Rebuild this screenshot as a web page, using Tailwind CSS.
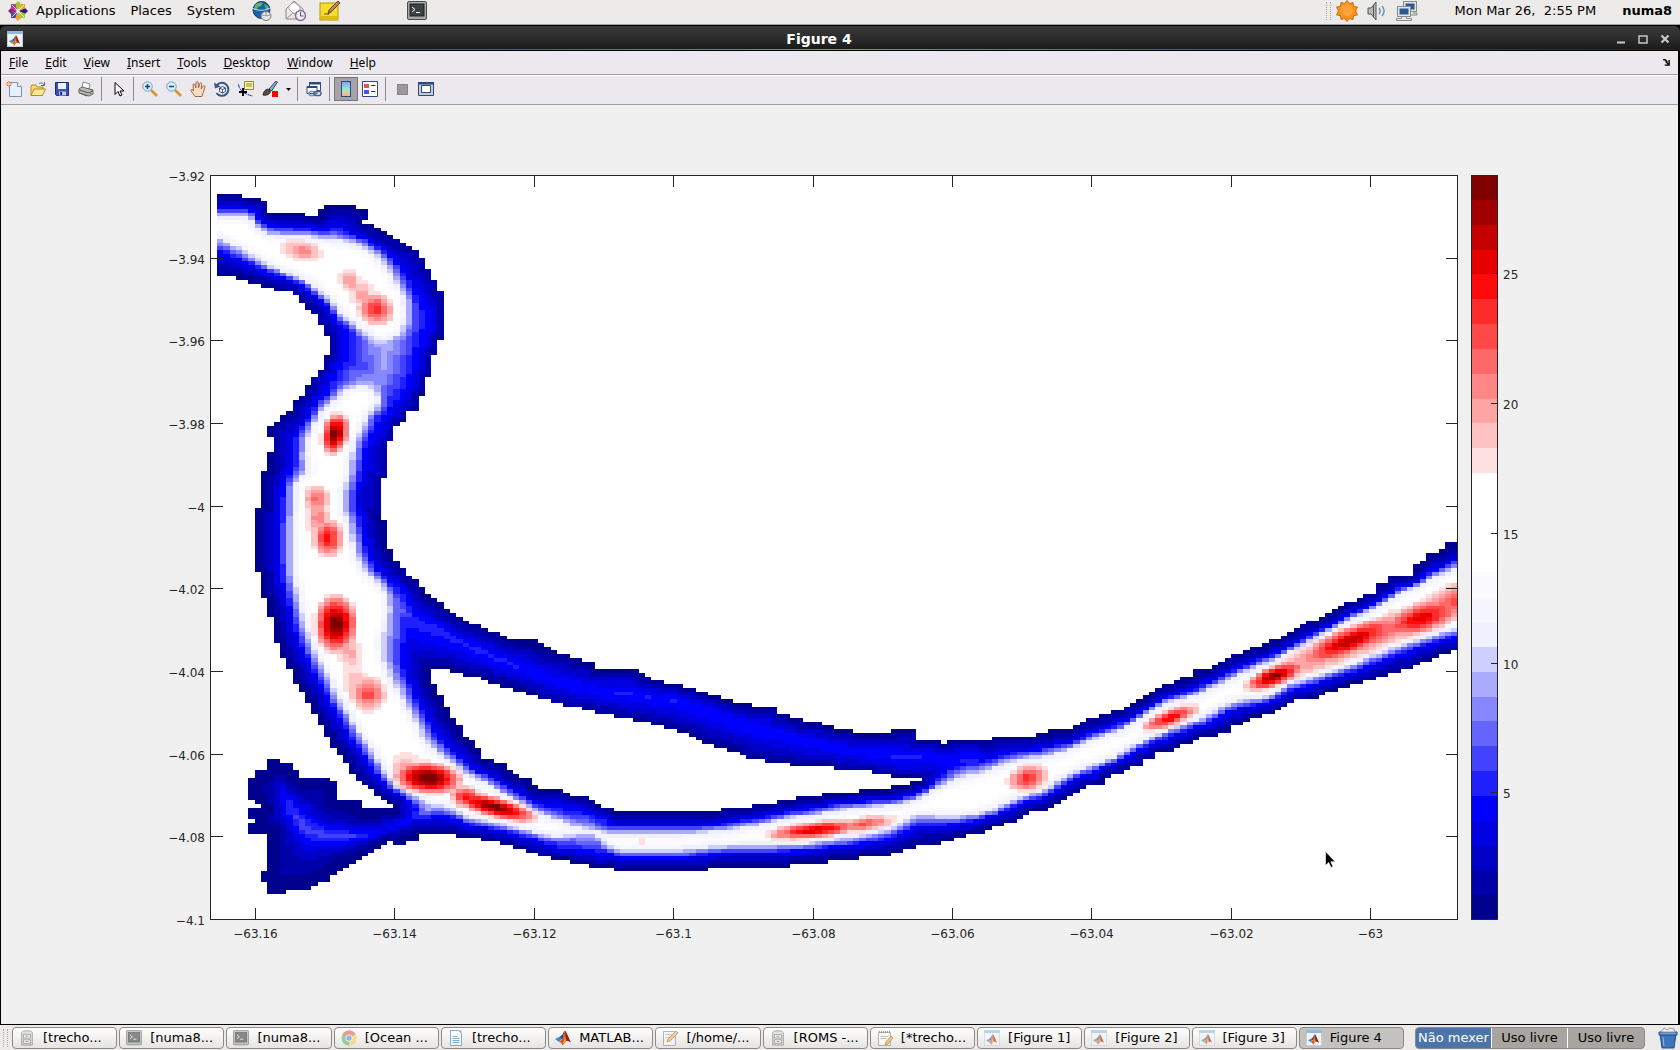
<!DOCTYPE html>
<html lang="en">
<head>
    <meta charset="UTF-8">
    <meta name="viewport" content="width=device-width, initial-scale=1.0">
    <title>Figure 4</title>
    <script src="https://cdn.jsdelivr.net/npm/@tailwindcss/browser@4"></script>
</head>
<body class="min-h-screen flex flex-col bg-[#edebe9] text-black text-[13px] leading-4 font-['DejaVu_Sans',sans-serif]">

    <!-- Shared icons -->
    <svg class="hidden">
        <symbol id="i-matlab" viewBox="0 0 16 16">
            <path d="M0 9l5-2.500 2.500 2-3.500 3.500z" fill="#3a8ec8"/>
            <path d="M5 6.500l2-1.500c1-1 1.600-3.500 2.600-4.500l-1.600 8-1.500.500z" fill="#1c4f8c"/>
            <path d="M4 12c1.500-1 3-2 4-4.500 .500-3 1-6 2-7 1.500 1 3.500 8 6 12-2-1-3-2-4.500-1.500S9 14 7.500 15.500C7 13.500 5.500 12 4 12z" fill="#d9541e"/>
            <path d="M10 .500c1.500 1 3.500 8 6 12-2-1-3-2-4.500-1.500z" fill="#8c1d12"/>
            <path d="M9 4c.800 2 .600 6-1.500 10 1.500-1 2.500-2.500 3.500-3z" fill="#f8a030"/>
        </symbol>
        <symbol id="i-figure" viewBox="0 0 16 16">
            <rect x=".5" y=".5" width="15" height="15" fill="#f2f3f5" stroke="#c9cdd2"/>
            <path d="M0 0h16v3H0z" fill="#8bbbe0"/>
            <svg x="2" y="4" width="11" height="11"><use href="#i-matlab"/></svg>
        </symbol>
        <symbol id="i-term" viewBox="0 0 20 20">
            <rect x=".5" y=".5" width="19" height="18" rx="1.500" fill="#a9aba6" stroke="#4a4c49"/>
            <rect x="3" y="3" width="14" height="12" fill="#3b4144" stroke="#222"/>
            <path d="M5 6l3 2.500-3 2.500M9 11.500h4" fill="none" stroke="#fff"/>
        </symbol>
        <symbol id="i-cabinet" viewBox="0 0 16 18">
            <path d="M2 3l2-2h8l2 2v14H2z" fill="#cfcfcc" stroke="#6b6b68"/>
            <rect x="4" y="5" width="8" height="4" fill="#eee" stroke="#777"/>
            <rect x="4" y="11" width="8" height="4" fill="#eee" stroke="#777"/>
            <path d="M6.500 7h3M6.500 13h3" stroke="#555"/>
        </symbol>
    </svg>

    <!-- Desktop panel -->
    <header class="h-[25px] shrink-0 flex items-center pl-2 pr-2 pb-[2px] border-b border-[#a5a39e] whitespace-nowrap">
        <svg class="w-5 h-5 mr-2" viewBox="0 0 20 20">
            <path d="M10 0l3 3-3 6-3-6z" fill="#9ccd2a"/><path d="M10 20l3-3-3-6-3 6z" fill="#efa724"/>
            <path d="M0 10l3-3 6 3-6 3z" fill="#932279"/><path d="M20 10l-3-3-6 3 6 3z" fill="#262577"/>
            <path d="M3 3h4.500l1.500 5-1 1-5-1.500z" fill="#b23a92"/><path d="M17 3v4.500l-5 1.500-1-1 1.500-5z" fill="#efa724"/>
            <path d="M3 17v-4.500l5-1.500 1 1-1.500 5z" fill="#4a49a8"/><path d="M17 17h-4.500l-1.500-5 1-1 5 1.500z" fill="#9ccd2a"/>
            <path d="M4 4l12 12M16 4L4 16" stroke="#fff" stroke-width=".8"/>
        </svg>
        <nav class="flex gap-[15px]">
            <a href="#">Applications</a>
            <a href="#">Places</a>
            <a href="#">System</a>
        </nav>
        <div class="flex items-center gap-3 ml-4">
            <button aria-label="Web browser">
                <svg class="w-[22px] h-[22px] block" viewBox="0 0 22 22">
                    <circle cx="10.500" cy="10" r="8.500" fill="#1c5fa8" stroke="#123c70"/>
                    <path d="M4 5c3-3 6-3 8-2l-2 3-3 1-1 3-3-1zM13 4l4 2 1 4-3-1z" fill="#62b36a"/>
                    <path d="M1 8c5 3 13 3 18 0" fill="none" stroke="#c6ddf3"/>
                    <ellipse cx="15" cy="16" rx="5" ry="4.500" fill="#e5e5e5" stroke="#777"/>
                    <path d="M15 12v4M11 15c3 1 5 1 8 0" fill="none" stroke="#999"/>
                </svg>
            </button>
            <button aria-label="Mail">
                <svg class="w-[22px] h-[22px] block" viewBox="0 0 22 22">
                    <path d="M1 9l8-8 9 8v10H1z" fill="#e8e8e6" stroke="#8a8a86"/>
                    <path d="M4 9V6l5-4 6 5v3l-6 4z" fill="#fff" stroke="#aaa"/>
                    <path d="M1 19l7-6 2 1" fill="none" stroke="#999"/>
                    <circle cx="15.500" cy="15.500" r="5" fill="#f2eef5" stroke="#8b6a9b" stroke-width="1.500"/>
                    <path d="M15.500 12v4h3" fill="none" stroke="#555"/>
                </svg>
            </button>
            <button aria-label="Notes">
                <svg class="w-[22px] h-[22px] block" viewBox="0 0 22 22">
                    <rect x="1" y="3" width="18" height="17" fill="#f7dc2c" stroke="#b89608"/>
                    <path d="M2 16h16v3H2z" fill="#e0bb14"/>
                    <path d="M9 14l1-4 9-9 2 2-9 9z" fill="#c58b35" stroke="#5c3d12"/>
                    <path d="M5 14h5" stroke="#555"/>
                </svg>
            </button>
        </div>
        <button class="ml-[66px]" aria-label="Terminal"><svg class="w-5 h-5 block"><use href="#i-term"/></svg></button>
        <div class="ml-auto flex items-center">
            <div class="w-[5px] h-[18px] mr-1 border-x border-dotted border-[#aaa]"></div>
            <svg class="w-6 h-[22px] mr-[6px]" viewBox="0 0 24 22">
                <path d="M12 .500l2.500 3L18 2.500l.500 4 4 .500-2 4 2 4-4 .500-.500 4-3.500-1L12 21.500l-2.500-3-3.500 1-.500-4-4-.500 2-4-2-4 4-.500.500-4 3.500 1z" fill="#f8921e" stroke="#d26a08"/>
                <circle cx="12" cy="10" r="6" fill="#ffae4a" opacity=".6"/>
            </svg>
            <svg class="w-6 h-5 mr-[6px]" viewBox="0 0 24 20">
                <path d="M3 7h3l5-6v18l-5-6H3z" fill="#b9bbb8" stroke="#555753"/>
                <path d="M8.500 4v12" stroke="#555753"/>
                <path d="M14 7c1.500 2 1.500 4 0 6M17 5c2.500 3 2.500 7 0 10" fill="none" stroke="#6f93c4" stroke-width="1.500"/>
            </svg>
            <svg class="w-6 h-[22px]" viewBox="0 0 24 22">
                <rect x="8.500" y="1.500" width="13" height="10" fill="#e3e5e2" stroke="#888a85"/><rect x="10.500" y="3.500" width="9" height="6" fill="#2b5797"/>
                <path d="M14 15h8v-2h-4" fill="#ddd" stroke="#888a85"/>
                <rect x="2.500" y="6.500" width="13" height="10" fill="#e3e5e2" stroke="#888a85"/><rect x="4.500" y="8.500" width="9" height="6" fill="#2b5797"/>
                <path d="M1.500 20.500h15v-2h-5v-2h-5v2h-5z" fill="#e8e8e6" stroke="#888a85"/>
            </svg>
            <span class="ml-[36px] whitespace-pre">Mon Mar 26,  2:55 PM</span>
            <span class="ml-[26px] font-bold">numa8</span>
        </div>
    </header>

    <!-- Window -->
    <main class="flex-1 flex flex-col bg-black">
        <div class="h-[26px] shrink-0 flex items-center pt-px px-[9px] rounded-t-md border-y border-black bg-linear-to-b from-[#3a3a3a] via-[#2c2c2c] to-[#191919] relative">
            <svg class="w-4 h-4 -ml-[2px]"><use href="#i-figure"/></svg>
            <h1 class="flex-1 text-center text-white text-sm leading-4 font-bold">Figure 4</h1>
            <div class="flex gap-[10px] text-[#c8c8c8]">
                <button aria-label="Minimize"><svg class="w-3 h-3 block" viewBox="0 0 12 12"><path d="M2 8.500h8v2H2z" fill="currentColor"/></svg></button>
                <button aria-label="Maximize"><svg class="w-3 h-3 block" viewBox="0 0 12 12"><path d="M2 3h8v7H2z" fill="none" stroke="currentColor" stroke-width="1.500"/></svg></button>
                <button aria-label="Close"><svg class="w-3 h-3 block" viewBox="0 0 12 12"><path d="M2.500 2.500l7 7M9.500 2.500l-7 7" stroke="currentColor" stroke-width="2.200"/></svg></button>
            </div>
            <div class="absolute inset-x-0 bottom-0 h-px bg-linear-to-r from-[#222] via-[#6d8fc0] to-[#222]"></div>
        </div>

        <div class="flex-1 flex flex-col ml-px mr-[2px] bg-[#f0f0f0]">
            <nav class="h-6 shrink-0 flex items-center gap-[17px] pl-2 pr-2 bg-[#ebe9ed] border-b border-[#9f9da1] text-xs font-['Noto_Sans',sans-serif]">
                <a href="#"><u>F</u>ile</a>
                <a href="#"><u>E</u>dit</a>
                <a href="#"><u>V</u>iew</a>
                <a href="#"><u>I</u>nsert</a>
                <a href="#"><u>T</u>ools</a>
                <a href="#"><u>D</u>esktop</a>
                <a href="#"><u>W</u>indow</a>
                <a href="#"><u>H</u>elp</a>
                <button class="ml-auto" aria-label="Dock figure">
                    <svg class="w-[7px] h-[7px] block" viewBox="0 0 8 8"><path d="M0 1c2-1 4 1 5 3M7 1v6H2M7 7L3 3" fill="none" stroke="#000" stroke-width="1.600"/></svg>
                </button>
            </nav>

            <div class="h-[30px] shrink-0 flex items-center pl-px pb-[2px] bg-[#ebe9ed] border-t border-white border-b border-b-[#9f9da1] [&>button]:flex [&>button]:items-center [&>button]:justify-center">
                <button class="w-6 h-6" aria-label="New figure"><svg class="w-4 h-4" viewBox="0 0 16 16"><path d="M3.500 1.500h8l4 4v10h-12z" fill="#e6f1fb" stroke="#7093b8"/><path d="M11.500 1.500v4h4" fill="#fff" stroke="#7093b8"/><path d="M3 0v6M0 3h6M1 1l4 4M5 1L1 5" stroke="#e8742a"/><circle cx="3" cy="3" r="1" fill="#fff3a0"/></svg></button>
                <button class="w-6 h-6" aria-label="Open"><svg class="w-4 h-4" viewBox="0 0 16 16"><path d="M1 14V5l1-1h4l1 2h6v3" fill="#f6dc7e" stroke="#b38b1d"/><path d="M1 14.500l3-6.500h11.500l-3 6.500z" fill="#fcea98" stroke="#b38b1d"/><path d="M9 3c2-2 4-1 5 1M14.500 1v3.500H11" fill="none" stroke="#4a6a94"/></svg></button>
                <button class="w-6 h-6" aria-label="Save"><svg class="w-4 h-4" viewBox="0 0 16 16"><path d="M1.500 1.500h13v13h-12l-1-1z" fill="#3c50b8" stroke="#202a78"/><path d="M4 2h8v6H4z" fill="#eef2fb"/><path d="M5 10.500h7v4H5z" fill="#c7cbd8"/><path d="M6 11h2v3H6z" fill="#202a78"/></svg></button>
                <button class="w-6 h-6" aria-label="Print"><svg class="w-4 h-4" viewBox="0 0 16 16"><path d="M4 7l1-6 7 2-1 5z" fill="#fff" stroke="#888"/><path d="M1 8l3-2 11 3v4l-4 2L1 12z" fill="#b9bab6" stroke="#666"/><path d="M1.500 9l9.500 3 4-2.500M3 12.500l6 2.500" fill="none" stroke="#555"/><path d="M12 12.500h1.500" stroke="#3a3"/></svg></button>
                <span class="w-2 h-6 border-l border-[#8b898d] translate-x-[3px]"></span>
                <button class="w-6 h-6" aria-label="Edit plot"><svg class="w-4 h-4" viewBox="0 0 16 16"><path d="M5 1.500v12l3-3 2 4.500 2-1-2-4h4z" fill="#fff" stroke="#000"/></svg></button>
                <span class="w-2 h-6 border-l border-[#8b898d] translate-x-[3px]"></span>
                <button class="w-6 h-6" aria-label="Zoom in"><svg class="w-4 h-4" viewBox="0 0 16 16"><path d="M9 9l6 6" stroke="#d8912c" stroke-width="2.500"/><circle cx="5.500" cy="5.500" r="4.700" fill="#d4f0fb" stroke="#6f9fc4"/><path d="M3 5.500h5M5.500 3v5" stroke="#1a3f80" stroke-width="1.500"/></svg></button>
                <button class="w-6 h-6" aria-label="Zoom out"><svg class="w-4 h-4" viewBox="0 0 16 16"><path d="M9 9l6 6" stroke="#d8912c" stroke-width="2.500"/><circle cx="5.500" cy="5.500" r="4.700" fill="#d4f0fb" stroke="#6f9fc4"/><path d="M3 5.500h5" stroke="#1a3f80" stroke-width="1.500"/></svg></button>
                <button class="w-6 h-6" aria-label="Pan"><svg class="w-4 h-4" viewBox="0 0 16 16"><path d="M5 15.500L.800 9.500c0-1.500 1.500-1.500 2.700.500L3 4c0-1.500 1.600-1.500 2 0l.800 3L6 1.500c.500-1.300 2-1.300 2.200 0L8.500 7l1.200-4.500c.500-1.200 2-.900 2 .400L11.200 8l2-2.800c1-1 2.300-.200 1.700 1L12 15.500z" fill="#fbdcc0" stroke="#8b6239" stroke-width=".9"/></svg></button>
                <button class="w-6 h-6" aria-label="Rotate 3D"><svg class="w-4 h-4" viewBox="0 0 16 16"><path d="M3 4a6.500 6.500 0 1 1-.500 8" fill="none" stroke="#3a5580" stroke-width="2"/><path d="M0 1.500l1 6 5.500-2z" fill="#3a5580"/><path d="M5.500 7l3-1.500 3 1.500v3.500l-3 1.500-3-1.500zM5.500 7l3 1.500 3-1.500M8.500 8.500V12" fill="#fff" stroke="#3a5580"/></svg></button>
                <button class="w-6 h-6" aria-label="Data cursor"><svg class="w-4 h-4" viewBox="0 0 16 16"><path d="M6.500 .500h9v8h-9z" fill="#fbf5a6" stroke="#8f8840"/><path d="M8 3h6M8 5h6" stroke="#8f8840"/><path d="M0 3c2 6 5 10 15 12" fill="none" stroke="#2222e0" stroke-dasharray="4 1"/><path d="M5 7v8M1 11h8" stroke="#000" stroke-width="2"/></svg></button>
                <button class="w-6 h-6" aria-label="Brush"><svg class="w-4 h-4" viewBox="0 0 16 16"><path d="M7 8l7-8 1.500 1-6 9z" fill="#93a7c8" stroke="#35466a"/><path d="M1 14c1-5 4-7 7-5 1 3-2 6-7 5z" fill="#5c4a46" stroke="#2e2422"/><path d="M10 10h6v6h-6z" fill="#f00"/></svg></button>
                <button class="w-3 h-6" aria-label="Brush options"><svg class="w-[5px] h-[3px]" viewBox="0 0 5 3"><path d="M0 0h5L2.500 3z"/></svg></button>
                <span class="w-2 h-6 border-l border-[#8b898d] translate-x-[3px]"></span>
                <button class="w-6 h-6" aria-label="Link plot"><svg class="w-4 h-4" viewBox="0 0 16 16"><path d="M3.500 1.500h11v8h-11z" fill="#fff" stroke="#2d4a7a"/><path d="M3 1h12v2.500H3z" fill="#2d4a7a"/><path d="M1 5.500h10v7H1z" fill="#fff" stroke="#2d4a7a"/><path d="M1 5h10v2H1z" fill="#2d4a7a"/><rect x="3" y="10.500" width="7" height="4" rx="2" fill="none" stroke="#7790b5" stroke-width="1.500"/><rect x="8" y="10.500" width="7" height="4" rx="2" fill="none" stroke="#4a6592" stroke-width="1.500"/></svg></button>
                <span class="w-2 h-6 border-l border-[#8b898d] translate-x-[3px]"></span>
                <button class="w-6 h-6 bg-[#a5a3a8] border border-[#77757a]" aria-label="Insert colorbar" aria-pressed="true">
                    <span class="w-[10px] h-4 border border-[#2d4a7a] bg-linear-to-b from-[#8f9af0] via-[#8be8d8] to-[#fbb08a]"></span>
                </button>
                <button class="w-6 h-6" aria-label="Insert legend"><svg class="w-4 h-4" viewBox="0 0 16 16"><path d="M.500 .500h15v15H.500z" fill="#fff" stroke="#2d4a7a"/><path d="M2 3h5v4H2z" fill="#e85050"/><path d="M2 9h5v4H2z" fill="#5050e8"/><path d="M9 4.500h4.500M9 10.500h4.500" stroke="#333"/></svg></button>
                <span class="w-2 h-6 border-l border-[#8b898d] translate-x-[3px]"></span>
                <button class="w-6 h-6" aria-label="Hide plot tools"><span class="w-[11px] h-[11px] bg-[#9a989b] border border-[#858386]"></span></button>
                <button class="w-6 h-6" aria-label="Show plot tools"><svg class="w-4 h-4" viewBox="0 0 16 16"><path d="M.500 1.500h15v13H.500z" fill="#c3cbe0" stroke="#2d4a7a"/><path d="M0 1h16v2.500H0z" fill="#2d4a7a"/><path d="M3.500 4.500h9v7h-9z" fill="#fff" stroke="#2d4a7a"/></svg></button>
            </div>

            <svg id="figure" class="block w-full" viewBox="1 105 1677 919" font-size="12" fill="#262626">
                <path d="M210 175H1458V920H210z" fill="#fff"/>
                <g id="cells" shape-rendering="crispEdges"></g>
                <g id="bar" shape-rendering="crispEdges"></g>
                <path id="ticks" fill="none" stroke="#262626" shape-rendering="crispEdges"/>
                <g id="labels"></g>
                <path d="M1325.500 851.500v14l3.200-3 2.300 5 2-1-2.200-4.800h4.400z" fill="#000" stroke="#fff" stroke-width=".6"/>
            </svg>
        </div>
        <div class="h-px shrink-0 bg-black"></div>
    </main>

    <!-- Task list -->
    <footer class="h-[25px] shrink-0 flex items-center pl-[3px] pr-[2px] whitespace-nowrap overflow-hidden">
        <div class="w-[5px] h-[18px] mr-1 border-x border-dotted border-[#aaa]"></div>
        <div id="tasks" class="flex-1 max-w-[1392px] min-w-0 grid grid-cols-13 gap-[2px]"></div>
        <div class="ml-auto flex h-[22px] rounded-sm overflow-hidden border border-[#8d8a86] bg-[#a8a5a1] divide-x divide-white [&>button]:w-[76px]">
            <button class="bg-[#4b74a8] text-white">Não mexer</button>
            <button>Uso livre</button>
            <button>Uso livre</button>
        </div>
        <button class="ml-[13px]" aria-label="Trash">
            <svg class="w-5 h-[22px] block" viewBox="0 0 20 22">
                <path d="M2 7h16l-2 14H4z" fill="#3d76bd" stroke="#1f4a85"/>
                <path d="M1 5h18v3H1z" fill="#6fa0d8" stroke="#1f4a85"/>
                <path d="M3 5l3-4 3 2 3-2 4 1 1 3z" fill="#f1f1ef" stroke="#999"/>
                <path d="M5 10l1 9" stroke="#8fb8e6"/>
            </svg>
        </button>
    </footer>

    <script>
        // ---- task list ----
        const icons = {
            cabinet: '<use href="#i-cabinet"/>',
            term: '<use href="#i-term"/>',
            matlab: '<use href="#i-matlab"/>',
            figure: '<use href="#i-figure"/>',
            chrome: '<circle cx="8" cy="8" r="7.500" fill="#5fb760"/><path d="M8 8L1.500 4.200A7.500 7.500 0 0 1 14.500 4.200z" fill="#e8584c"/><path d="M8 8l6.500-3.800A7.500 7.500 0 0 1 8 15.500z" fill="#f8d34c"/><circle cx="8" cy="8" r="3.500" fill="#fff"/><circle cx="8" cy="8" r="2.700" fill="#4d8be0"/>',
            writer: '<path d="M2.500 .500h8l3 3v12h-11z" fill="#fff" stroke="#2f83ad"/><path d="M10.500 .500l3 3v-3z" fill="#2f83ad"/><path d="M4.500 6.500h5M4.500 8.500h7M4.500 10.500h7M4.500 12.500h7" stroke="#2f83ad"/>',
            edit: '<path d="M1.500 1.500h12v14h-12z" fill="#f5f5f3" stroke="#8a8a88"/><path d="M3.500 4.500h7M3.500 7.500h4" stroke="#aaa"/><path d="M5 12l1-3 8-8 2 2-8 8z" fill="#f0b060" stroke="#a97535"/>',
            note: '<path d="M1.500 2.500h12v13h-12z" fill="#fdfdf6" stroke="#8a8a80"/><path d="M2 2h11" stroke="#555" stroke-width="2" stroke-dasharray="1 1"/><path d="M3.500 6.500h8M3.500 8.500h6" stroke="#999"/><path d="M8 15l1-3 5-6 2 2-5 6z" fill="#f6a93a" stroke="#a9641a"/>'
        };
        const tasks = [
            ['cabinet', '[trecho...'], ['term', '[numa8...'], ['term', '[numa8...'], ['chrome', '[Ocean ...'],
            ['writer', '[trecho...'], ['matlab', 'MATLAB...'], ['edit', '[/home/...'], ['cabinet', '[ROMS -...'],
            ['note', '[*trecho...'], ['figure', '[Figure 1]'], ['figure', '[Figure 2]'], ['figure', '[Figure 3]'], ['figure', 'Figure 4']
        ];
        document.getElementById('tasks').innerHTML = tasks.map(([icon, text]) => {
            const active = text === 'Figure 4';
            const minimized = text[0] === '[';
            return `<button class="h-[22px] min-w-0 flex items-center gap-2 pl-[6px] rounded-sm border border-[#8d8a86] overflow-hidden ${active ? 'bg-[#c4c2bf]' : 'bg-linear-to-b from-white to-[#e6e4e2]'}">
                <svg class="w-4 h-4 shrink-0 ${minimized ? 'opacity-60' : ''}" viewBox="0 0 16 16">${icons[icon]}</svg><span>${text}</span></button>`;
        }).join('');

        // ---- colour map, lowest level first ----
        const map = ['#00008f', '#0000ab', '#0000c7', '#0000e3', '#0000ff', '#2020ff', '#4242ff', '#6464ff', '#8686ff', '#aaaaff',
            '#ceceff', '#f0f0ff', '#f6f6ff', '#fafaff', '#fefeff', '#ffffff', '#ffffff', '#ffffff', '#ffe0e0', '#ffc2c2',
            '#ffa4a4', '#ff8686', '#ff6868', '#ff4848', '#ff2a2a', '#ff0a0a', '#e60000', '#c40000', '#a20000', '#800000'];

        // Banks as staircases: x and y in turn, each changing one coordinate of the corner before
        const bank = [217,194,242,197,261,201,268,212,305,216,318,209,324,205,356,208,368,220,362,223,375,227,381,231,387,235,394,238,400,242,406,246,412,249,419,257,425,268,431,279,438,290,444,339,438,354,431,376,425,395,419,410,412,413,406,421,400,425,394,443,387,480,381,521,387,551,394,562,400,570,406,577,413,581,419,588,425,596,431,600,438,603,444,611,450,614,456,618,463,622,469,626,482,629,488,633,501,637,507,641,538,645,545,648,551,652,557,655,570,659,582,663,595,670,639,674,645,678,652,682,664,685,683,689,696,693,708,696,721,700,734,704,752,708,778,715,790,719,803,723,822,726,834,730,853,734,891,730,916,741,941,745,948,741,992,737,1036,734,1048,730,1074,726,1080,723,1086,719,1099,715,1111,711,1124,708,1130,704,1137,700,1143,696,1149,693,1156,689,1162,685,1174,682,1181,678,1193,670,1212,667,1218,663,1225,659,1231,655,1244,652,1250,648,1263,644,1269,641,1281,637,1288,633,1294,629,1300,626,1307,622,1319,618,1325,614,1332,611,1338,607,1344,603,1357,600,1363,596,1376,585,1388,577,1414,566,1420,562,1426,555,1439,551,1445,544,1458,652,1451,655,1439,659,1432,663,1420,667,1414,670,1401,674,1388,678,1376,682,1363,685,1350,689,1338,693,1325,696,1319,700,1294,704,1288,708,1281,711,1275,715,1263,719,1250,723,1244,726,1231,734,1219,737,1200,741,1193,745,1181,749,1174,752,1156,760,1143,767,1130,771,1124,775,1111,779,1105,786,1086,790,1080,793,1074,797,1067,801,1061,804,1055,808,1049,812,1030,816,1023,819,1017,823,1004,827,992,831,986,834,967,838,954,842,941,845,916,849,904,853,891,857,860,860,828,864,790,868,708,872,614,868,589,864,570,860,551,857,538,853,526,849,513,845,501,842,482,838,457,834,419,842,406,845,394,842,387,845,381,849,375,853,368,857,362,860,356,864,349,868,343,872,337,875,331,883,318,886,312,890,286,894,268,883,261,872,268,834,249,823,255,819,249,808,261,804,255,801,249,778,255,771,268,760,280,763,293,771,299,778,331,782,337,801,362,808,394,804,387,801,381,797,375,790,368,786,362,782,356,775,349,763,343,756,337,749,331,737,324,726,318,715,312,704,305,693,299,685,293,670,286,659,280,644,274,618,268,600,261,574,255,510,261,473,268,451,274,439,268,425,275,421,280,417,286,413,293,402,299,395,305,387,312,376,318,369,324,357,331,335,324,325,318,315,312,309,305,303,299,297,293,293,286,290,274,287,261,283,249,279,236,276];
        const island = [431,670,450,674,463,678,482,682,488,685,501,689,513,693,526,696,538,700,551,704,564,708,582,711,595,715,614,719,633,723,652,726,664,730,677,734,690,737,696,741,702,745,715,749,727,752,740,756,746,760,765,763,790,767,834,771,872,775,891,778,923,782,910,786,891,790,860,793,822,797,797,801,778,804,753,808,721,812,614,808,601,804,595,801,589,797,570,793,564,789,538,786,532,778,519,775,513,771,507,763,495,760,482,749,475,741,469,737,463,726,456,719,450,708,444,696,438,685];

        // Edges of the deep water (level 11)
        const bend = [200,216,243,216,250,219,255,225,261,230,268,234,280,236,305,236,318,238,337,240,350,242,362,247,374,254,381,260,387,268,393,278,400,288,405,300,406,310,405,322,400,332,393,338,385,341,375,340,368,334,356,325,343,316,331,300,318,290,305,280,293,275,280,270,268,265,255,257,243,250,230,243,217,237,200,237];
        const channel = [343,392,350,388,362,385,372,388,378,395,378,405,368,415,361,430,355,443,350,460,349,475,344,490,343,510,348,520,352,540,358,560,368,575,381,585,388,596,388,610,386,625,382,640,383,660,388,672,394,685,400,690,405,705,415,720,422,735,432,748,445,758,455,765,463,772,475,778,489,785,505,795,520,803,535,812,551,818,560,820,570,826,590,830,600,832,614,834,660,834,700,833,720,831,740,828,765,824,790,818,815,815,840,810,870,807,900,805,918,799,935,789,960,778,985,772,1005,764,1020,760,1040,757,1065,752,1080,745,1100,737,1120,731,1135,722,1150,712,1165,703,1180,700,1200,694,1218,685,1230,679,1245,672,1275,660,1300,647,1325,633,1350,620,1375,608,1400,594,1420,585,1440,575,1480,558,1480,622,1440,633,1420,639,1400,645,1380,653,1360,661,1340,669,1310,678,1290,684,1275,693,1262,698,1240,700,1225,705,1213,712,1200,719,1185,724,1170,729,1150,738,1130,747,1115,757,1095,764,1075,772,1060,780,1045,790,1030,794,1010,801,995,809,975,814,955,817,930,815,915,815,900,824,885,831,860,836,830,840,800,844,760,845,720,846,700,848,680,850,620,850,608,845,600,837,590,833,570,835,551,837,538,833,525,830,507,825,490,822,470,818,457,811,445,806,430,805,420,798,405,791,395,785,386,775,380,762,370,748,361,735,352,720,345,708,338,697,330,680,325,670,318,658,312,645,305,625,300,605,297,590,293,575,292,545,294,500,295,485,300,478,308,470,305,455,307,440,311,428,318,418,324,408,335,400];

        // Shallow ridges: how steeply they fall off, then x, y, level
        const ridges = [
            [0.65, [384,338,10.5],[385,350,9.8],[385,366,9.2],[378,382,8.8],[366,390,10.5]],
            [0.9, [392,600,8.5],[412,620,5.9],[440,632,5.8],[470,647,5.5],[505,662,5.4],[550,680,4.8]],
            [0.75, [550,680,4.8],[600,692,4.9],[628,694,5.2],[680,702,5],[720,716,5],[770,732,5],[820,745,4.8],[870,753,4.9],[905,757,5.5],[935,758,5],[975,760,5.5]],
            [1.7, [436,806,10],[425,811,9],[412,818,5.2],[400,824,4.9],[385,830,5],[370,835,5.5],[345,837,6.6],[320,834,6.8],[305,827,7],[293,812,6.3],[286,798,5.6],[280,785,3.5]],
            [0.9, [560,829,11],[590,832,11]]
        ];

        // Deep holes: x, y, rx, ry, angle, peak level
        const holes = [[302,251,22,10,10,22],[350,281,11,14,-30,21],[362,294,12,14,-30,20.8],[376,309,20,17,20,25],
            [335,434,14,23,14,31],[317,499,14,15,0,23],[318,517,12,24,0,22],[328,538,17,21,0,26],[336,624,23,31,0,31],[349,652,13,20,-20,20.6],
            [368,694,19,19,0,24],[354,680,12,16,0,20],[428,778,36,17,5,32],[406,766,16,14,0,20.5],[494,807,48,11,15,30.5],[466,797,17,12,10,26],[642,841,4,4,0,19],
            [815,830,52,9,-6,27.5],[864,824,34,8,-8,23.5],[1028,778,22,14,-15,25],[1170,718,32,9,-20,27],[1275,676,34,11,-22,30],
            [1350,641,60,15,-22,28.5],[1422,618,50,17,-18,27],[1458,601,46,19,-22,24],[1365,638,122,16,-22,23.5]];

        function stairs(a) {
            const p = [];
            for (let i = 0; i < a.length; i++) p.push(i % 2 ? [a[i - 1], a[i]] : [a[i], a[(i || a.length) - 1]]);
            return p;
        }
        function pairs(a) {
            const p = [];
            for (let i = 0; i < a.length; i += 2) p.push([a[i], a[i + 1]]);
            return p;
        }
        // distance to a segment, and how far along it the nearest point lies
        function toSegment(x, y, a, b) {
            const dx = b[0] - a[0], dy = b[1] - a[1];
            const t = Math.max(0, Math.min(1, ((x - a[0]) * dx + (y - a[1]) * dy) / (dx * dx + dy * dy || 1)));
            return [Math.hypot(x - a[0] - t * dx, y - a[1] - t * dy), t];
        }
        function distance(x, y, poly) {
            let best = 1e9;
            poly.forEach((a, i) => {
                const b = poly[(i + 1) % poly.length];
                // the river runs on past the left and right limits of the data
                if (a[0] === b[0] && (a[0] === 217 || a[0] === 1458)) return;
                best = Math.min(best, toSegment(x, y, a, b)[0]);
            });
            return best;
        }
        function inside(x, y, poly) {
            let odd = false;
            for (let i = 0, j = poly.length - 1; i < poly.length; j = i++) {
                const [ax, ay] = poly[i], [bx, by] = poly[j];
                if (ay > y !== by > y && x < (bx - ax) * (y - ay) / (by - ay) + ax) odd = !odd;
            }
            return odd;
        }

        const outer = stairs(bank), hole = stairs(island), deeps = [pairs(bend), pairs(channel)];

        function level(x, y) {
            const shore = Math.min(distance(x, y, outer), distance(x, y, hole));
            let v = 0;
            for (const deep of deeps) {
                const d = distance(x, y, deep);
                if (inside(x, y, deep)) {
                    v = Math.max(v, Math.min(15, 11 + d * 0.4));
                    for (const [cx, cy, rx, ry, angle, peak] of holes) {
                        const c = Math.cos(angle * Math.PI / 180), s = Math.sin(angle * Math.PI / 180);
                        const r = Math.hypot(((x - cx) * c + (y - cy) * s) / rx, ((y - cy) * c - (x - cx) * s) / ry);
                        if (r < 1) v = Math.max(v, peak - (peak - 18) * Math.pow(r, 1.2));
                    }
                } else {
                    const u = shore / (shore + d);
                    v = Math.max(v, (u < 0.6 ? u * 6.5 : 3.9 + (u - 0.6) * 17.7) * (x < 400 && y > 805 ? 0.4 : 1));
                }
            }
            for (const [power, ...ridge] of ridges) {
                for (let i = 1; i < ridge.length; i++) {
                    const [d, t] = toSegment(x, y, ridge[i - 1], ridge[i]);
                    const top = ridge[i - 1][2] + t * (ridge[i][2] - ridge[i - 1][2]);
                    v = Math.max(v, top * Math.pow(shore / (shore + d), power));
                }
            }
            return Math.min(29, Math.floor(v));
        }

        // ---- cells ----
        const cols = 197, rows = 187;
        const ex = i => Math.round(217 + i * 1240.5 / cols), ey = j => Math.round(194 + j * 699.7 / rows);
        const paths = map.map(() => '');
        for (let j = 0; j < rows; j++) {
            for (let i = 0; i < cols; i++) {
                const x = (ex(i) + ex(i + 1)) / 2, y = (ey(j) + ey(j + 1)) / 2;
                if (!inside(x, y, outer) || inside(x, y, hole)) continue;
                paths[level(x, y)] += `M${ex(i)} ${ey(j)}H${ex(i + 1)}V${ey(j + 1)}H${ex(i)}z`;
            }
        }
        document.getElementById('cells').innerHTML = paths.map((d, k) => `<path d="${d}" fill="${map[k]}"/>`).join('');
        document.getElementById('bar').innerHTML = map.map((c, k) =>
            `<rect x="1471" y="${Math.round(920 - (k + 1) * 745 / 30)}" width="27" height="25" fill="${c}"/>`).reverse().join('');

        // ---- axes ----
        let ticks = 'M210.5 175.5H1457.5V919.5H210.5zM1471.5 175.5H1497.5V919.5H1471.5z', labels = '';
        ['3.92', '3.94', '3.96', '3.98', '4', '4.02', '4.04', '4.06', '4.08', '4.1'].forEach((t, k) => {
            const y = Math.round(175 + k * 744 / 9) + 0.5;
            ticks += `M210 ${y}h13M1458 ${y}h-12`;
            labels += `<text x="205" y="${y + 5}" text-anchor="end">−${t}</text>`;
        });
        ['63.16', '63.14', '63.12', '63.1', '63.08', '63.06', '63.04', '63.02', '63'].forEach((t, k) => {
            const x = Math.round(255 + k * 139.4) + 0.5;
            ticks += `M${x} 175v12M${x} 920v-12`;
            labels += `<text x="${x}" y="938" text-anchor="middle">−${t}</text>`;
        });
        [5, 10, 15, 20, 25].forEach(t => {
            const y = Math.round(922 - t * 25.95) + 0.5;
            ticks += `M1498 ${y}h-7`;
            labels += `<text x="1503" y="${y + 5}">${t}</text>`;
        });
        document.getElementById('ticks').setAttribute('d', ticks);
        document.getElementById('labels').innerHTML = labels;
    </script>
</body>
</html>
